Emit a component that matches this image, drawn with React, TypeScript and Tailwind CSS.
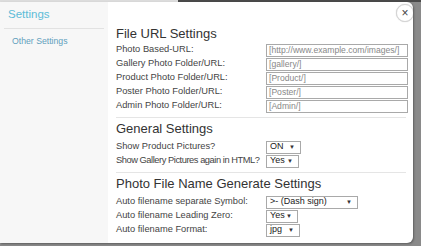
import React from "react";

const fileRows = [
    { label: "Photo Based-URL:", value: "[http://www.example.com/images/]" },
    { label: "Gallery Photo Folder/URL:", value: "[gallery/]" },
    { label: "Product Photo Folder/URL:", value: "[Product/]" },
    { label: "Poster Photo Folder/URL:", value: "[Poster/]" },
    { label: "Admin Photo Folder/URL:", value: "[Admin/]" },
];

const Select = ({ value, width }: { value: string; width: string }) => (
    <div
        className={`h-[13px] ${width} border border-[#a9a9a9] bg-white flex items-center justify-between pl-[3px] pr-[5px] text-[9px] text-[#222]`}
    >
        <span>{value}</span>
        <span className="text-[6px] text-[#333]">▼</span>
    </div>
);

const Row = ({ label, tight, children }: { label: string; tight?: boolean; children: React.ReactNode }) => (
    <div className="h-[14px] flex items-center">
        <div
            className={`w-[150px] shrink-0 text-[9.3px] text-[#444] whitespace-nowrap ${tight ? "tracking-[-0.45px]" : ""}`}
        >
            {label}
        </div>
        {children}
    </div>
);

const App = () => {
    return (
        <div
            className="w-[421px] h-[246px] overflow-hidden bg-[#8a8a8a] flex flex-col"
            style={{ fontFamily: '"Liberation Sans", Arial, sans-serif' }}
        >
            <div className="h-[2px] flex shrink-0">
                <div className="w-[178px] bg-[#dcdcdc]" />
                <div className="flex-1 bg-[#4a4a4a]" />
            </div>
            <div className="w-[413px] h-[241px] bg-white rounded-r-[6px] flex overflow-hidden relative shadow-[1px_1px_2px_rgba(0,0,0,0.3)]">
                {/* Sidebar */}
                <div className="w-[108px] bg-[#f7f7f7] px-[4px] shrink-0">
                    <div className="h-[26px] flex items-center pl-[4px] text-[11.5px] text-[#5dbcd8]">Settings</div>
                    <div className="border-t border-[#e2e2e2]" />
                    <div className="h-[26px] flex items-center pl-[8px] text-[8.7px] text-[#5f9fbd]">Other Settings</div>
                </div>

                {/* Main */}
                <div className="flex-1 pl-[8px] pr-[8px] pt-[24px]">
                    <div className="h-[17px] pb-[2px] flex items-center text-[13px] text-[#333]">File URL Settings</div>
                    {fileRows.map((r) => (
                        <Row key={r.label} label={r.label}>
                            <div className="h-[13px] w-[142px] border border-[#a9a9a9] flex items-center px-[2px] text-[8.6px] text-[#888] whitespace-nowrap overflow-hidden">
                                {r.value}
                            </div>
                        </Row>
                    ))}
                    <div className="mt-[4px] border-t border-[#e5e5e5] mr-[2px]" />

                    <div className="pt-[3px] h-[20px] flex items-end text-[13px] text-[#333]">General Settings</div>
                    <div className="mt-[2px]">
                        <Row label="Show Product Pictures?">
                            <Select value="ON" width="w-[35px]" />
                        </Row>
                        <Row label="Show Gallery Pictures again in HTML?" tight>
                            <Select value="Yes" width="w-[33px]" />
                        </Row>
                    </div>
                    <div className="mt-[4px] border-t border-[#e5e5e5] mr-[2px]" />

                    <div className="pt-[3px] h-[20px] flex items-end text-[13px] text-[#333]">
                        Photo File Name Generate Settings
                    </div>
                    <div className="mt-[2px]">
                        <Row label="Auto filename separate Symbol:">
                            <Select value=">- (Dash sign)" width="w-[92px]" />
                        </Row>
                        <Row label="Auto filename Leading Zero:">
                            <Select value="Yes" width="w-[32px]" />
                        </Row>
                        <Row label="Auto filename Format:">
                            <Select value="jpg" width="w-[34px]" />
                        </Row>
                    </div>
                </div>

                {/* Close */}
                <div className="absolute top-[2px] right-[-1px] w-[18px] h-[18px] rounded-full border border-[#d4d4d4] bg-white shadow-[0_0_1px_rgba(0,0,0,0.25)] flex items-center justify-center text-[12px] text-[#444] leading-none">
                    ×
                </div>
            </div>
        </div>
    );
};

export default App;
